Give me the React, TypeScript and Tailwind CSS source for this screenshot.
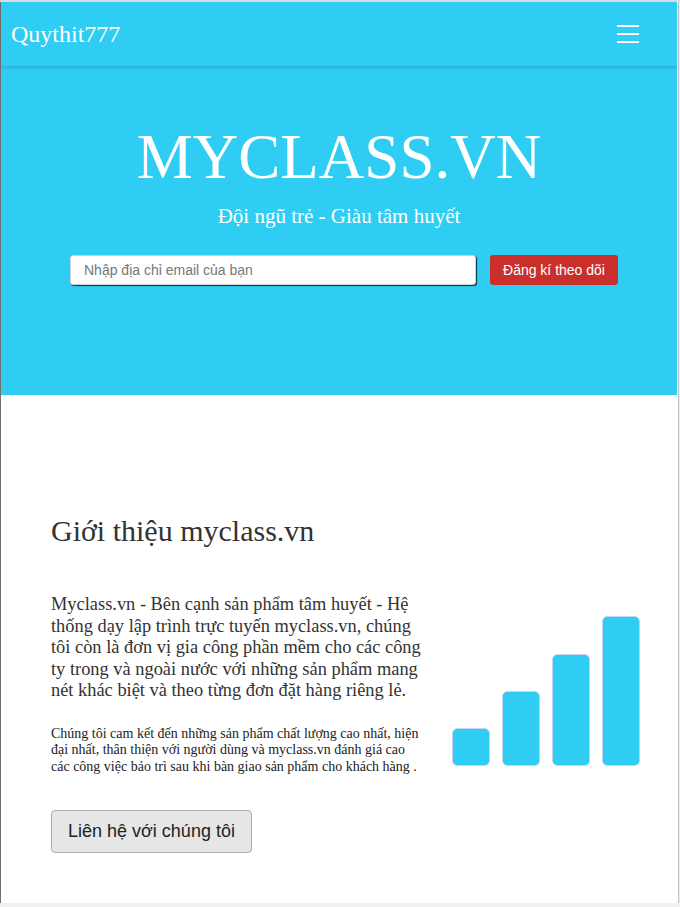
export default function App() {
  // bar chart heights (px)
  const bars = [37, 74, 111, 149]

  return (
    <div className="w-[680px] h-[907px] overflow-hidden flex flex-col bg-white border-t-2 border-[#dcdcdc]">
      <div className="flex flex-1 min-h-0">
        <div className="w-px bg-[#707070]" />

        <div className="flex-1 flex flex-col min-w-0">
          {/* Navbar */}
          <nav className="relative z-10 h-[64px] bg-[#2fcdf3] flex items-center justify-between pl-[10px] pr-[38px] shadow-[0_2px_3px_rgba(0,0,0,0.14)]">
            <span className="text-white text-[24px] font-['Liberation_Serif',serif]">Quythit777</span>
            <button className="flex flex-col gap-[6px]">
              <span className="block w-[22px] h-[2px] bg-white" />
              <span className="block w-[22px] h-[2px] bg-white" />
              <span className="block w-[22px] h-[2px] bg-white" />
            </button>
          </nav>

          {/* Hero */}
          <section className="h-[329px] bg-[#2fcdf3] flex flex-col items-center pt-[60px]">
            <h1 className="text-white text-[63px] leading-none font-['Liberation_Serif',serif]">MYCLASS.VN</h1>
            <p className="mt-[15px] text-white text-[21px] leading-[25px] font-['Liberation_Serif',serif]">
              Đội ngũ trẻ - Giàu tâm huyết
            </p>
            <div className="mt-[26px] self-start pl-[69px] flex gap-[14px]">
              <input
                placeholder="Nhập địa chỉ email của bạn"
                className="w-[406px] h-[30px] bg-white rounded-[3px] border border-[#d0d0d0] px-[13px] text-[14px] text-[#555] placeholder:text-[#777] outline-none shadow-[1px_1px_1px_rgba(0,0,0,0.75)] font-['Liberation_Sans',sans-serif]"
              />
              <button className="w-[128px] h-[30px] rounded-[3px] bg-[#c9302c] text-white text-[14px] font-['Liberation_Sans',sans-serif]">
                Đăng kí theo dõi
              </button>
            </div>
          </section>

          {/* About */}
          <section className="flex-1 pt-[119px] pl-[50px] text-[#333] font-['Liberation_Serif',serif]">
            <h2 className="text-[30px] leading-[33px]">Giới thiệu myclass.vn</h2>
            <div className="mt-[47px] flex">
              <div className="w-[372px]">
                <p className="text-[18.4px] leading-[21.6px]">
                  Myclass.vn - Bên cạnh sản phẩm tâm huyết - Hệ thống dạy lập trình trực tuyến myclass.vn, chúng tôi còn là đơn vị gia công phần mềm cho các công ty trong và ngoài nước với những sản phẩm mang nét khác biệt và theo từng đơn đặt hàng riêng lẻ.
                </p>
                <p className="mt-[24px] text-[14px] leading-[16.5px] text-[#222]">
                  Chúng tôi cam kết đến những sản phẩm chất lượng cao nhất, hiện đại nhất, thân thiện với người dùng và myclass.vn đánh giá cao các công việc bảo trì sau khi bàn giao sản phẩm cho khách hàng .
                </p>
                <button className="mt-[35px] h-[43px] px-[16px] rounded-[4px] bg-[#e6e6e6] border border-[#adadad] text-[18px] text-[#222] font-['Liberation_Sans',sans-serif]">
                  Liên hệ với chúng tôi
                </button>
              </div>
              <svg width="189" height="150" viewBox="0 0 189 150" className="ml-[29px] mt-[22px]">
                {bars.map((h, i) => (
                  <rect
                    key={i}
                    x={0.5 + i * 50}
                    y={149.5 - h}
                    width="37"
                    height={h}
                    rx="5"
                    fill="#2fcdf3"
                    stroke="#e7c6ee"
                    strokeWidth="0.6"
                  />
                ))}
              </svg>
            </div>
          </section>
        </div>

        <div className="w-[3px] flex">
          <div className="w-px bg-white" />
          <div className="w-px bg-[#c4c4c4]" />
          <div className="w-px bg-[#ededed]" />
        </div>
      </div>
      <div className="h-[4px] bg-[#f0f0f0]" />
    </div>
  )
}
